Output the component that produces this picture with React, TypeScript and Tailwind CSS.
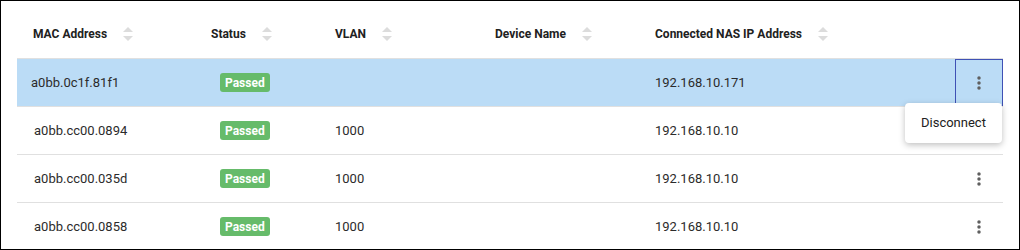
import { useState } from "react";

interface Session {
  mac: string;
  status: string;
  vlan: string;
  deviceName: string;
  nasIp: string;
}

const sessions: Session[] = [
  { mac: "a0bb.0c1f.81f1", status: "Passed", vlan: "", deviceName: "", nasIp: "192.168.10.171" },
  { mac: "a0bb.cc00.0894", status: "Passed", vlan: "1000", deviceName: "", nasIp: "192.168.10.10" },
  { mac: "a0bb.cc00.035d", status: "Passed", vlan: "1000", deviceName: "", nasIp: "192.168.10.10" },
  { mac: "a0bb.cc00.0858", status: "Passed", vlan: "1000", deviceName: "", nasIp: "192.168.10.10" },
];

const columns = ["MAC Address", "Status", "VLAN", "Device Name", "Connected NAS IP Address"];

const gridCols = "grid grid-cols-[178px_124px_160px_160px_1fr_48px]";

function SortIcon() {
  return (
    <svg width="10" height="14" viewBox="0 0 10 14" className="ml-4 shrink-0">
      <path d="M5 0 L10 5 L0 5 Z" fill="#dcdcdc" />
      <path d="M0 9 L10 9 L5 14 Z" fill="#dcdcdc" />
    </svg>
  );
}

function MoreIcon() {
  return (
    <svg width="20" height="20" viewBox="0 0 24 24">
      <circle cx="12" cy="6" r="2.1" fill="#5f5f5f" />
      <circle cx="12" cy="12" r="2.1" fill="#5f5f5f" />
      <circle cx="12" cy="18" r="2.1" fill="#5f5f5f" />
    </svg>
  );
}

export default function App() {
  const [openIndex] = useState<number | null>(0);

  return (
    <div
      className="w-[1020px] h-[250px] border border-black bg-white overflow-hidden px-4 pt-2"
      style={{ fontFamily: "Roboto, 'Liberation Sans', sans-serif" }}
    >
      <div className={`${gridCols} h-[50px] border-b border-[#e0e0e0] items-center`}>
        {columns.map((col) => (
          <div key={col} className="flex items-center pl-4 text-[12px] font-bold text-[#212121]">
            <span>{col}</span>
            <SortIcon />
          </div>
        ))}
        <div />
      </div>
      {sessions.map((s, i) => {
        const selected = i === 0;
        return (
          <div
            key={s.mac}
            className={`${gridCols} h-[48px] border-b border-[#e0e0e0] items-center text-[13px] text-[#2b2b2b] ${
              selected ? "bg-[#bbdcf6]" : "bg-white"
            }`}
          >
            <div className={selected ? "pl-[14px]" : "pl-[17px]"}>{s.mac}</div>
            <div className="pl-[25px]">
              <span className="inline-flex h-[19px] items-center rounded-[3px] bg-[#66bb6a] px-[5px] text-[12px] font-bold text-white">
                {s.status}
              </span>
            </div>
            <div className="pl-4">{s.vlan}</div>
            <div className="pl-4">{s.deviceName}</div>
            <div className="pl-4">{s.nasIp}</div>
            <div className="relative h-full">
              <button
                type="button"
                className={`flex h-full w-full items-center justify-center ${
                  selected ? "border border-[#3f51b5]" : ""
                }`}
              >
                <MoreIcon />
              </button>
              {openIndex === i && (
                <div className="absolute right-[1px] top-[44px] z-10 flex h-[40px] w-[97px] items-center rounded bg-white pl-4 text-[13px] text-[#212121] shadow-[0_2px_6px_rgba(0,0,0,0.25)]">
                  Disconnect
                </div>
              )}
            </div>
          </div>
        );
      })}
    </div>
  );
}
